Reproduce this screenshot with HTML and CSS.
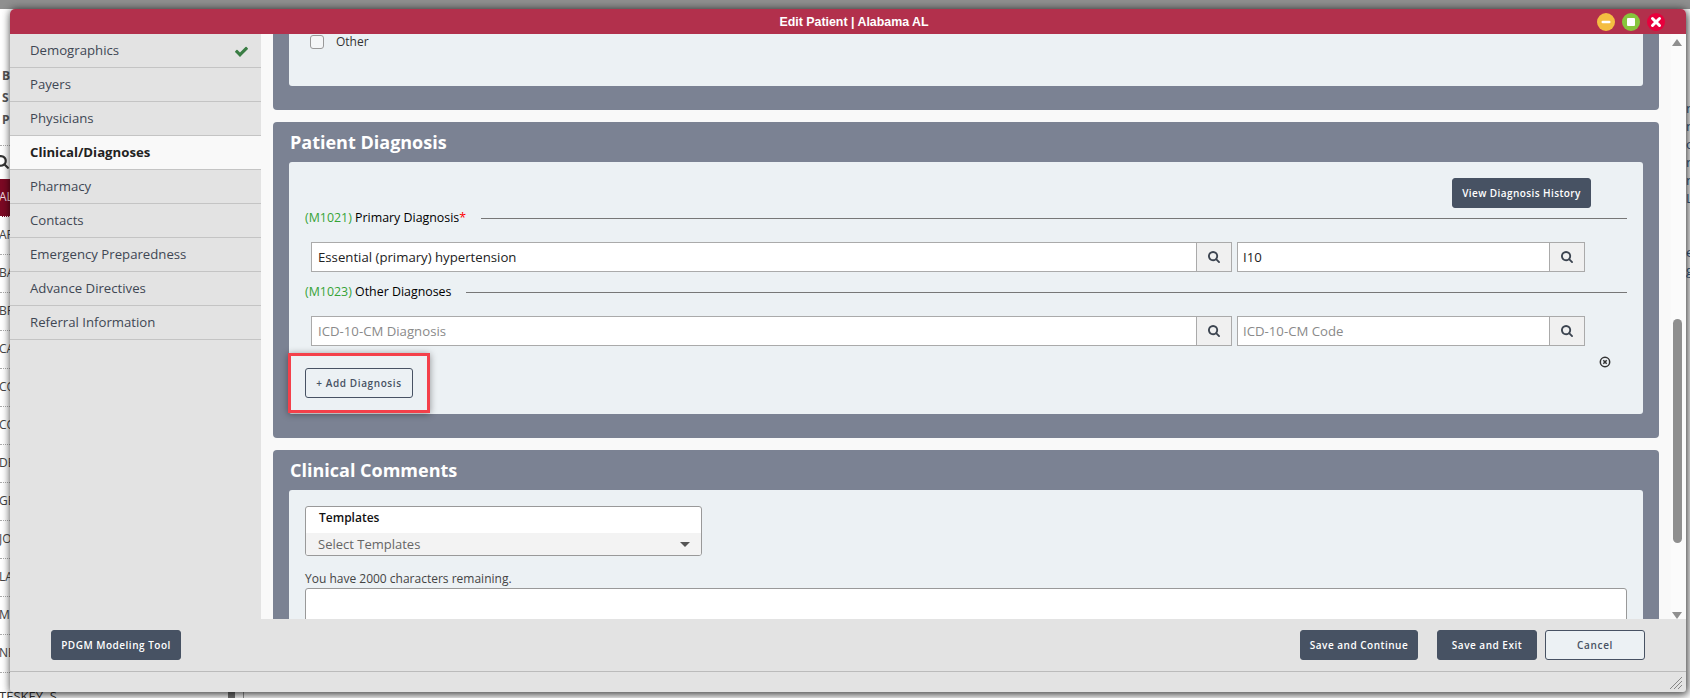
FILE: index.html
```html
<!DOCTYPE html>
<html lang="en">
<head>
<meta charset="utf-8">
<title>Edit Patient</title>
<link rel="stylesheet" href="styles.css">
</head>
<body>
<svg class="defs" aria-hidden="true">
  <symbol id="i-search" viewBox="0 0 1664 1792"><path d="M1152 704q0-185-131.500-316.500t-316.500-131.500-316.500 131.500-131.500 316.500 131.500 316.500 316.500 131.500 316.500-131.500 131.500-316.500zm512 832q0 52-38 90t-90 38q-54 0-90-38l-343-342q-179 124-399 124-143 0-273.500-55.500t-225-150-150-225-55.500-273.500 55.500-273.500 150-225 225-150 273.500-55.500 273.500 55.500 225 150 150 225 55.500 273.500q0 220-124 399l343 343q37 37 37 90z"/></symbol>
</svg>

<div class="backdrop">
  <div class="bd-top"><span>Patient Charts</span></div>
  <div class="bd-left">
    <div class="bd-bold">B</div>
    <div class="bd-bold">S</div>
    <div class="bd-bold">P</div>
    <div class="bd-sep"></div>
    <svg class="bd-search"><use href="#i-search"/></svg>
    <div class="bd-row bd-sel">AL</div>
    <div class="bd-row">AR</div>
    <div class="bd-row">BA</div>
    <div class="bd-row">BR</div>
    <div class="bd-row">CA</div>
    <div class="bd-row">CO</div>
    <div class="bd-row">CO</div>
    <div class="bd-row">DE</div>
    <div class="bd-row">GE</div>
    <div class="bd-row">JO</div>
    <div class="bd-row">LA</div>
    <div class="bd-row">M</div>
    <div class="bd-row">NE</div>
  </div>
  <div class="bd-bottom"><span>TESKEY, S</span><i class="bd-thumb"></i><i class="bd-line"></i></div>
  <div class="bd-right">
    <span>nt</span><span>ni</span><span>o</span><span>ni</span><span>n</span><span>L</span><span></span><span></span><span>e</span><span>g</span>
  </div>
</div>

<div class="modal">
  <header class="titlebar">
    <span class="title">Edit Patient | Alabama AL</span>
    <div class="win-btns">
      <span class="win win-min"><svg viewBox="0 0 18 18"><rect x="4.500" y="7.800" width="9" height="2.400" rx="1.200"/></svg></span>
      <span class="win win-max"><svg viewBox="0 0 18 18"><rect x="5" y="5" width="8" height="8" rx="1"/></svg></span>
      <span class="win win-close"><svg viewBox="0 0 18 18"><path d="M5.500 5.500l7 7M12.500 5.500l-7 7"/></svg></span>
    </div>
  </header>

  <div class="modal-body">
    <nav class="sidebar">
      <a class="nav-item">Demographics
        <svg class="nav-check" viewBox="0 0 1792 1792"><path d="M1671 566q0 40-28 68l-724 724-136 136q-28 28-68 28t-68-28l-136-136-362-362q-28-28-28-68t28-68l136-136q28-28 68-28t68 28l294 295 656-657q28-28 68-28t68 28l136 136q28 28 28 68z"/></svg>
      </a>
      <a class="nav-item">Payers</a>
      <a class="nav-item">Physicians</a>
      <a class="nav-item nav-active">Clinical/Diagnoses</a>
      <a class="nav-item">Pharmacy</a>
      <a class="nav-item">Contacts</a>
      <a class="nav-item">Emergency Preparedness</a>
      <a class="nav-item">Advance Directives</a>
      <a class="nav-item">Referral Information</a>
    </nav>

    <main class="content">
      <div class="scroller">
        <section class="panel panel-cut">
          <div class="inner inner-cut">
            <label class="check-row"><span class="checkbox"></span>Other</label>
          </div>
        </section>

        <section class="panel">
          <h2 class="panel-title">Patient Diagnosis</h2>
          <div class="inner inner-diag">
            <div class="history-row"><button class="btn btn-dark btn-history">View Diagnosis History</button></div>
            <div class="sec-row">
              <span class="sec-label"><span class="m-code">(M1021)</span> Primary Diagnosis<span class="req">*</span></span>
              <span class="sec-line"></span>
            </div>
            <div class="field-row">
              <div class="field field-wide"><input class="field-input" value="Essential (primary) hypertension"><span class="addon"><svg class="i-s"><use href="#i-search"/></svg></span></div>
              <div class="field field-code"><input class="field-input" value="I10"><span class="addon"><svg class="i-s"><use href="#i-search"/></svg></span></div>
            </div>
            <div class="sec-row sec-row-2">
              <span class="sec-label"><span class="m-code">(M1023)</span> Other Diagnoses</span>
              <span class="sec-line"></span>
            </div>
            <div class="field-row">
              <div class="field field-wide"><input class="field-input" placeholder="ICD-10-CM Diagnosis"><span class="addon"><svg class="i-s"><use href="#i-search"/></svg></span></div>
              <div class="field field-code"><input class="field-input" placeholder="ICD-10-CM Code"><span class="addon"><svg class="i-s"><use href="#i-search"/></svg></span></div>
            </div>
            <div class="add-row">
              <button class="btn btn-outline btn-add">+ Add Diagnosis</button>
              <svg class="remove" viewBox="0 0 12 12"><circle cx="6" cy="6" r="4.700"/><path d="M4.300 4.300l3.400 3.400M7.700 4.300l-3.400 3.400"/></svg>
            </div>
            <div class="highlight"></div>
          </div>
        </section>

        <section class="panel">
          <h2 class="panel-title">Clinical Comments</h2>
          <div class="inner inner-comments">
            <div class="templates">
              <div class="tpl-label">Templates</div>
              <div class="tpl-select">Select Templates<span class="tpl-caret"></span></div>
            </div>
            <div class="remaining">You have 2000 characters remaining.</div>
            <textarea class="comment-box"></textarea>
          </div>
        </section>
      </div>
      <div class="scrollbar">
        <span class="arrow-up"></span>
        <span class="thumb"></span>
        <span class="arrow-down"></span>
      </div>
    </main>
  </div>

  <footer class="footer">
    <button class="btn btn-dark btn-pdgm">PDGM Modeling Tool</button>
    <div class="footer-right">
      <button class="btn btn-dark btn-continue">Save and Continue</button>
      <button class="btn btn-dark btn-exit">Save and Exit</button>
      <button class="btn btn-outline btn-cancel">Cancel</button>
    </div>
  </footer>
  <div class="statusbar">
    <svg class="grip" viewBox="0 0 12 12"><path d="M0 12L12 0M4 12L12 4M8 12L12 8"/></svg>
  </div>
</div>
</body>
</html>
```

FILE: styles.css
```css
* { box-sizing: border-box; }
html, body { margin: 0; height: 698px; overflow: hidden; }
body { position: relative; background: #fff; font-family: "Open Sans", "Liberation Sans", sans-serif; font-size: 12px; color: #222; }
.defs { position: absolute; width: 0; height: 0; }

/* page behind the dialog */
.backdrop { position: absolute; inset: 0; overflow: hidden; }
.bd-top { height: 9px; background: #8f8f8f; position: relative; overflow: hidden; }
.bd-top span { position: absolute; left: 908px; top: -13px; color: #fff; font: bold 12px/18px "Open Sans", sans-serif; }
.bd-left { position: absolute; left: 0; top: 65px; width: 10px; overflow: hidden; color: #444; font-size: 12px; }
.bd-bold { height: 22px; line-height: 22px; font-weight: 700; padding-left: 2px; color: #555; }
.bd-sep { height: 15px; border-bottom: 1px dotted #aaa; }
.bd-search { display: block; width: 14px; height: 15px; margin: 9px 0 9px -5px; fill: #333; }
.bd-row { width: 10px; height: 38px; line-height: 36px; overflow: hidden; white-space: nowrap; border-bottom: 1px dotted #aaa; text-indent: -1px; }
.bd-sel { background: #7c0a24; color: #f3d9df; border-bottom-color: #fff; }
.bd-bottom { position: absolute; left: 0; top: 692px; right: 0; height: 6px; overflow: hidden; }
.bd-bottom span { position: absolute; left: -1px; top: -5px; font-size: 13px; line-height: 18px; color: #333; }
.bd-thumb { position: absolute; left: 228px; top: 0; width: 7px; height: 6px; background: #777; }
.bd-line { position: absolute; left: 243px; top: 0; width: 1px; height: 6px; background: #999; }
.bd-right { position: absolute; right: 0; top: 99px; width: 4px; overflow: hidden; color: #35608c; font-size: 13px; line-height: 18px; }
.bd-right span { display: block; height: 18px; white-space: nowrap; }

/* dialog */
.modal { position: absolute; left: 10px; top: 9px; width: 1676px; height: 683px; display: flex; flex-direction: column; background: #e3e3e3; border-radius: 5px 5px 3px 3px; box-shadow: 0 0 8px rgba(0,0,0,.45), 2px 3px 8px rgba(0,0,0,.55); overflow: hidden; }
.titlebar { position: relative; height: 25px; flex: none; background: #b2304c; display: flex; align-items: center; justify-content: center; padding-left: 12px; }
.title { color: #fff; font: bold 12.4px "Liberation Sans", Arial, sans-serif; }
.win-btns { position: absolute; right: 21px; top: 4px; display: flex; gap: 7px; }
.win { width: 18px; height: 18px; border-radius: 50%; display: block; }
.win svg { display: block; width: 18px; height: 18px; fill: #fff; }
.win-min { background: #f4bd41; }
.win-max { background: #87c53c; }
.win-close { background: #e8003c; }
.win-close path { fill: none; stroke: #fff; stroke-width: 3; stroke-linecap: round; }

.modal-body { flex: none; height: 585px; display: flex; }
.sidebar { width: 251px; flex: none; background: #e3e3e3; }
.nav-item { display: flex; align-items: center; justify-content: space-between; height: 34px; padding: 0 12px 0 20px; border-bottom: 1px solid #c4c4c4; color: #3f4754; font-size: 13.2px; line-height: 1; }
.nav-active { background: #f9f9f9; color: #222; font-weight: 700; }
.nav-check { width: 15px; height: 15px; fill: #3a7d44; margin-top: 2px; }

.content { flex: 1; display: flex; background: #f9f9f9; overflow: hidden; }
.scroller { flex: 1; padding-left: 12px; padding-right: 12px; overflow: hidden; }
.panel { background: #7b8293; border-radius: 4px; padding: 0 16px 24px; margin-bottom: 12px; }
.panel-cut { height: 76px; border-radius: 0 0 4px 4px; }
.panel-title { margin: 0; height: 40px; padding-left: 1px; color: #fff; font-size: 18px; font-weight: 700; line-height: 40px; }
.inner { position: relative; background: #ecf1f4; border-radius: 3px; padding: 16px; }
.inner-cut { height: 52px; padding: 0 0 0 21px; border-radius: 0 0 3px 3px; }
.check-row { display: flex; align-items: center; gap: 12px; color: #333; font-size: 12px; line-height: 13px; }
.checkbox { width: 14px; height: 14px; background: #f4f6f7; border: 1px solid #999; border-radius: 3px; position: relative; top: 1px; }

.history-row { display: flex; justify-content: flex-end; padding-right: 36px; }
.btn { height: 30px; border-radius: 3px; font-family: "Open Sans", sans-serif; font-size: 10px; font-weight: 600; letter-spacing: .5px; padding: 0; white-space: nowrap; }
.btn-dark { background: #475263; border: 1px solid #475263; color: #fff; }
.btn-outline { background: #ecf1f4; border: 1px solid #475263; color: #475263; }
.btn-history { width: 139px; letter-spacing: .42px; }

.sec-row { display: flex; align-items: center; gap: 15px; height: 20px; }
.sec-row-2 { margin-top: 10px; }
.sec-label { position: relative; top: -1px; color: #000; font-size: 12.4px; font-weight: 500; white-space: nowrap; }
.m-code { color: #36a336; font-weight: 400; }
.req { color: #f00; }
.sec-line { flex: 1; height: 1px; background: #777; }

.field-row { display: flex; gap: 5px; margin: 14px 0 0 6px; }
.field { display: flex; height: 30px; background: #fff; border: 1px solid #aaa; }
.field-wide { width: 921px; }
.field-code { width: 348px; }
.field-input { flex: 1; min-width: 0; border: 0; outline: 0; padding: 0 6px; background: #fff; color: #222; font: 13.2px "Open Sans", sans-serif; }
.field-code .field-input { padding-left: 5px; }
.field-input::placeholder { color: #8a8a8a; opacity: 1; }
.addon { width: 35px; flex: none; display: flex; align-items: center; justify-content: center; background: #f0f0f0; border-left: 1px solid #aaa; }
.i-s { width: 12px; height: 13px; fill: #3c4450; }

.add-row { display: flex; justify-content: space-between; margin-top: 10px; }
.btn-add { width: 108px; margin-top: 12px; letter-spacing: .6px; }
.remove { width: 12px; height: 12px; margin: 0 16px 0 0; fill: none; stroke: #333; stroke-width: 1.500; }
.highlight { position: absolute; left: -1px; top: 191px; width: 142px; height: 60px; border: 3px solid #f4404a; box-shadow: 0 1px 7px rgba(0,0,0,.4); }

.inner-comments { height: 300px; }
.templates { width: 397px; height: 50px; border: 1px solid #999; border-radius: 3px; background: #fff; overflow: hidden; }
.tpl-label { height: 26px; padding-left: 13px; color: #111; font-size: 12px; font-weight: 600; line-height: 21px; }
.tpl-select { position: relative; height: 22px; padding-left: 12px; background: #f3f3f3; color: #666; font-size: 13px; line-height: 22px; }
.tpl-caret { position: absolute; right: 11px; top: 9px; width: 0; height: 0; border-left: 5px solid transparent; border-right: 5px solid transparent; border-top: 5px solid #555; }
.remaining { margin-top: 14px; height: 18px; color: #444; font-size: 12px; line-height: 18px; }
.comment-box { display: block; width: 100%; height: 90px; background: #fff; border: 1px solid #999; border-radius: 3px; resize: none; outline: 0; }

.scrollbar { position: relative; width: 15px; flex: none; background: #fbfbfb; display: flex; flex-direction: column; align-items: center; padding-right: 3px; }
.arrow-up { margin-top: 5px; width: 0; height: 0; border-left: 5px solid transparent; border-right: 5px solid transparent; border-bottom: 7px solid #8f8f8f; }
.thumb { margin-top: 273px; width: 9px; height: 224px; background: #8f8f8f; border-radius: 5px; }
.arrow-down { margin-top: 69px; width: 0; height: 0; border-left: 5px solid transparent; border-right: 5px solid transparent; border-top: 7px solid #8f8f8f; }

.footer { flex: none; height: 53px; display: flex; justify-content: space-between; padding: 11px 41px 0; border-bottom: 1px solid #bbb; background: #e3e3e3; }
.btn-pdgm { width: 130px; }
.footer-right { display: flex; }
.btn-continue { width: 118px; margin-right: 19px; }
.btn-exit { width: 100px; margin-right: 8px; }
.btn-cancel { width: 100px; letter-spacing: .7px; }
.statusbar { flex: 1; display: flex; justify-content: flex-end; align-items: flex-end; padding: 0 4px 3px 0; }
.grip { width: 12px; height: 12px; fill: none; stroke: #888; stroke-width: 1; }
```
